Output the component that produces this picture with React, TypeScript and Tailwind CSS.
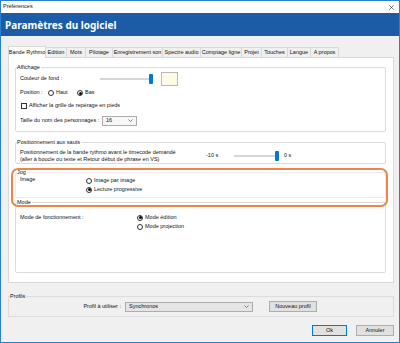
import React from 'react';

const tabs: { label: string; w: string }[] = [
  { label: 'Bande Rythmo', w: 'w-[38px]' },
  { label: 'Edition', w: 'w-[21px]' },
  { label: 'Mots', w: 'w-[19px]' },
  { label: 'Pilotage', w: 'w-[27px]' },
  { label: 'Enregistrement son', w: 'w-[50px]' },
  { label: 'Spectre audio', w: 'w-[38px]' },
  { label: 'Comptage ligne', w: 'w-[41px]' },
  { label: 'Projet', w: 'w-[20px]' },
  { label: 'Touches', w: 'w-[26px]' },
  { label: 'Langue', w: 'w-[23px]' },
  { label: 'A propos', w: 'w-[28px]' },
];

const Radio = ({ checked = false }: { checked?: boolean }) => (
  <span className="w-[6px] h-[6px] rounded-full border border-[#333] bg-white flex items-center justify-center shrink-0">
    {checked && <span className="w-[3px] h-[3px] rounded-full bg-[#111]" />}
  </span>
);

const Chevron = () => (
  <svg width="5" height="3" viewBox="0 0 5 3" className="shrink-0">
    <path d="M0.5 0.5 L2.5 2.5 L4.5 0.5" fill="none" stroke="#555" strokeWidth="0.7" />
  </svg>
);

const Slider = ({ w }: { w: string }) => (
  <div className={`${w} h-[10px] flex items-center shrink-0`}>
    <div className="flex-1 h-[2px] bg-[#d6d6d6]" />
    <div className="w-[4px] h-[10px] rounded-[1px] bg-[#0078d7]" />
  </div>
);

const GroupLabel = ({ children }: { children: React.ReactNode }) => (
  <span className="absolute left-[1px] -top-[4px] leading-[7px] bg-white pr-[1px]">{children}</span>
);

export default function App() {
  return (
    <div className="w-[400px] h-[343px] flex flex-col border border-[#2b7fd3] font-['Liberation_Sans',Arial,sans-serif] text-[5.5px] text-[#111] leading-none whitespace-nowrap overflow-hidden">
      {/* title bar */}
      <div className="h-[12px] bg-white flex items-center justify-between pl-[2px] pr-[5px]">
        <span>Préférences</span>
        <svg width="5" height="5" viewBox="0 0 5 5">
          <path d="M0.3 0.3 L4.7 4.7 M4.7 0.3 L0.3 4.7" stroke="#222" strokeWidth="0.6" />
        </svg>
      </div>

      {/* header */}
      <div className="h-[23px] bg-[#1c5ca6] flex items-center pl-[4px]">
        <span className="text-white text-[10px] font-bold font-['Noto_Sans',sans-serif]">Paramètres du logiciel</span>
      </div>

      <div className="flex-1 bg-[#f0f0f0] flex flex-col">
        {/* tabs */}
        <div className="mt-[9px] ml-[7px] h-[12px] flex items-end">
          {tabs.map((t, i) =>
            i === 0 ? (
              <div key={t.label} className={`${t.w} h-[12px] bg-white border border-b-0 border-[#d9d9d9] flex items-center justify-center relative z-10 -mb-[1px]`}>
                {t.label}
              </div>
            ) : (
              <div key={t.label} className={`${t.w} h-[10px] bg-[#f0f0f0] border border-l-0 border-b-0 border-[#d9d9d9] flex items-center justify-center`}>
                {t.label}
              </div>
            )
          )}
        </div>

        {/* tab panel */}
        <div className="relative ml-[7px] w-[386px] h-[226px] bg-white border border-[#d9d9d9] pl-[6px] flex flex-col">
          {/* Affichage */}
          <div className="relative mt-[9px] w-[371px] h-[65px] border border-[#dcdcdc] rounded-[2px] pl-[4px] flex flex-col">
            <GroupLabel>Affichage</GroupLabel>
            <div className="mt-[4px] h-[14px] flex items-center">
              <span className="w-[80px]">Couleur de fond :</span>
              <Slider w="w-[53px]" />
              <div className="ml-[8px] w-[17px] h-[14px] border border-[#b8b8b8] bg-[#fbfbe6]" />
            </div>
            <div className="h-[14px] flex items-center">
              <span className="w-[28px]">Position :</span>
              <span className="w-[29px] flex items-center gap-[2px]">
                <Radio />
                Haut
              </span>
              <span className="flex items-center gap-[2px]">
                <Radio checked />
                Bas
              </span>
            </div>
            <div className="h-[12px] flex items-center gap-[2px] pl-[1px]">
              <span className="w-[6px] h-[6px] border border-[#333] bg-white shrink-0" />
              Afficher la grille de repérage en pieds
            </div>
            <div className="mt-[3px] h-[11px] flex items-center">
              <span className="w-[82px]">Taille du nom des personnages :</span>
              <div className="w-[35px] h-[10px] border border-[#adadad] bg-[#f7f7f7] flex items-center justify-between pl-[3px] pr-[3px]">
                <span>16</span>
                <Chevron />
              </div>
            </div>
          </div>

          {/* Positionnement aux sauts */}
          <div className="relative mt-[10px] w-[371px] h-[22px] border border-[#dcdcdc] rounded-[2px] pl-[4px] pt-[6px]">
            <GroupLabel>Positionnement aux sauts</GroupLabel>
            <div className="h-[13px] flex items-center">
              <div className="w-[186px] flex flex-col gap-[0.5px] leading-[6px]">
                <span>Positionnement de la bande rythmo avant le timecode demandé</span>
                <span>(aller à boucle ou texte et Retour début de phrase en VS)</span>
              </div>
              <span className="w-[28px]">-10 s</span>
              <Slider w="w-[45px]" />
              <span className="ml-[5px]">0 s</span>
            </div>
          </div>

          {/* Jog */}
          <div className="relative mt-[8px] w-[371px] h-[26px] border border-[#ececec] rounded-[2px] pl-[4px] pt-[3px]">
            <GroupLabel>Jog</GroupLabel>
            <div className="h-[9px] flex items-center">
              <span className="w-[66px] -mt-[2px]">Image</span>
              <span className="flex items-center gap-[2px]">
                <Radio />
                Image par image
              </span>
            </div>
            <div className="h-[9px] flex items-center pl-[66px] gap-[2px]">
              <Radio checked />
              Lecture progressive
            </div>
          </div>

          {/* Mode */}
          <div className="relative mt-[4px] w-[371px] h-[71px] border border-[#dcdcdc] rounded-[2px] pl-[4px] pt-[10px]">
            <GroupLabel>Mode</GroupLabel>
            <div className="h-[9px] flex items-center">
              <span className="w-[117px]">Mode de fonctionnement :</span>
              <span className="flex items-center gap-[2px]">
                <Radio checked />
                Mode édition
              </span>
            </div>
            <div className="h-[9px] flex items-center pl-[117px] gap-[2px]">
              <Radio />
              Mode projection
            </div>
          </div>

          {/* highlight */}
          <div className="absolute left-[2px] top-[110px] w-[377px] h-[39px] border-2 border-[#ee8547] rounded-[7px] pointer-events-none" />
        </div>

        {/* Profils */}
        <div className="relative mt-[13px] ml-[7px] w-[386px] h-[21px] border border-[#dcdcdc] pt-[4px] flex">
          <span className="absolute left-[1px] -top-[4px] leading-[7px] bg-[#f0f0f0] pr-[1px]">Profils</span>
          <div className="h-[11px] flex items-center">
            <span className="w-[112px] text-right">Profil à utiliser :</span>
            <div className="ml-[4px] w-[128px] h-[10px] border border-[#adadad] bg-[#e5e5e5] flex items-center justify-between pl-[3px] pr-[3px]">
              <span>Synchronos</span>
              <Chevron />
            </div>
            <button className="ml-[16px] w-[48px] h-[11px] border border-[#adadad] bg-[#e1e1e1] flex items-center justify-center">
              Nouveau profil
            </button>
          </div>
        </div>

        {/* bottom buttons */}
        <div className="mt-[8px] h-[11px] flex justify-end gap-[9px] pr-[5px]">
          <button className="w-[35px] h-[11px] border border-[#0078d7] bg-[#e1e1e1] flex items-center justify-center">Ok</button>
          <button className="w-[38px] h-[11px] border border-[#adadad] bg-[#e1e1e1] flex items-center justify-center">Annuler</button>
        </div>
      </div>
    </div>
  );
}
